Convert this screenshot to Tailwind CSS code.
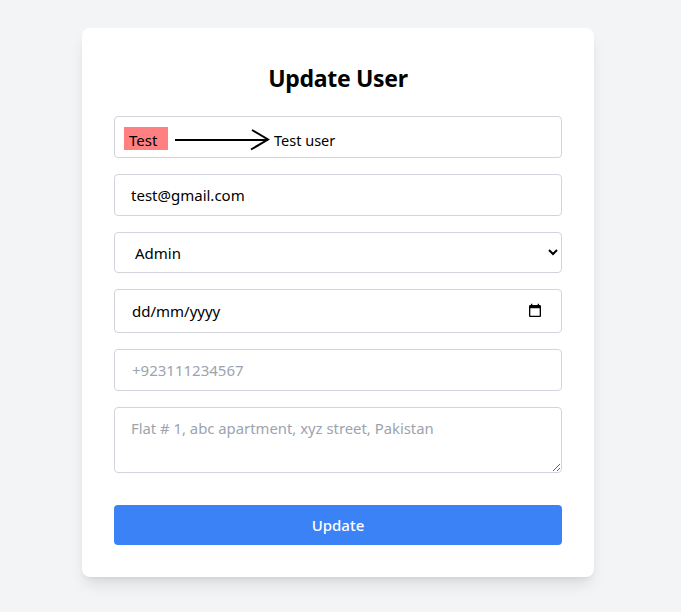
<!DOCTYPE html>
<html lang="en-GB">
<head>
<meta charset="utf-8">
<title>Update User</title>
<script src="https://cdn.jsdelivr.net/npm/@tailwindcss/browser@4"></script>
</head>
<body class="bg-[#f3f4f6] font-['Noto_Sans','Open_Sans',sans-serif] text-black">
    <div class="flex justify-center w-[676px] pt-[28px] min-h-[612px]">
        <div class="w-[512px] h-[549px] bg-white rounded-lg shadow-lg p-8">
            <h2 class="text-[23px] tracking-[-0.3px] font-bold text-center mb-5 leading-[36px]">Update User</h2>

            <form class="flex flex-col gap-4">
                <!-- name, annotated -->
                <div class="relative h-[42px] border border-[#d1d5db] rounded">
                    <span class="absolute left-[9px] top-[10px] w-[44px] h-[23px] bg-[#ff8080] pl-[5px] text-[15px] leading-[26px]">Test</span>
                    <svg class="absolute left-[59px] top-[12px]" width="98" height="22" viewBox="0 0 98 22" fill="none" stroke="#000" stroke-width="2">
                        <path d="M1 11h93"/>
                        <path d="M78 1l16 9.500-17 10"/>
                    </svg>
                    <span class="absolute left-[159px] top-[10px] text-[14.5px] leading-[26px]">Test user</span>
                </div>

                <input type="email" value="test@gmail.com" class="h-[42px] px-4 border border-[#d1d5db] rounded text-[15px]">

                <select class="h-[41px] px-4 border border-[#d1d5db] rounded text-[15px] bg-white">
                    <option>Admin</option>
                    <option>User</option>
                </select>

                <div class="relative">
                    <input type="text" value="dd/mm/yyyy" class="w-full h-[44px] pl-[17px] pr-4 border border-[#d1d5db] rounded text-[15px]">
                    <svg class="absolute right-[19px] top-[14px]" width="16" height="16" viewBox="0 0 24 24" fill="#000">
                        <path d="M19 3h-1V1h-2v2H8V1H6v2H5c-1.110 0-1.990.9-1.990 2L3 19c0 1.100.89 2 2 2h14c1.100 0 2-.9 2-2V5c0-1.100-.9-2-2-2zm0 16H5V8h14v11z"/>
                    </svg>
                </div>

                <input type="text" placeholder="+923111234567" class="h-[42px] pl-[17px] pr-4 border border-[#d1d5db] rounded text-[15px] placeholder-[#9ca3af]">

                <textarea placeholder="Flat # 1, abc apartment, xyz street, Pakistan" class="h-[66px] px-4 pt-[9px] pb-2 border border-[#d1d5db] rounded text-[14.85px] placeholder-[#9ca3af]"></textarea>

                <button type="submit" class="mt-4 h-[40px] bg-[#3b82f6] text-white text-[15px] font-medium rounded">Update</button>
            </form>
        </div>
    </div>
</body>
</html>
